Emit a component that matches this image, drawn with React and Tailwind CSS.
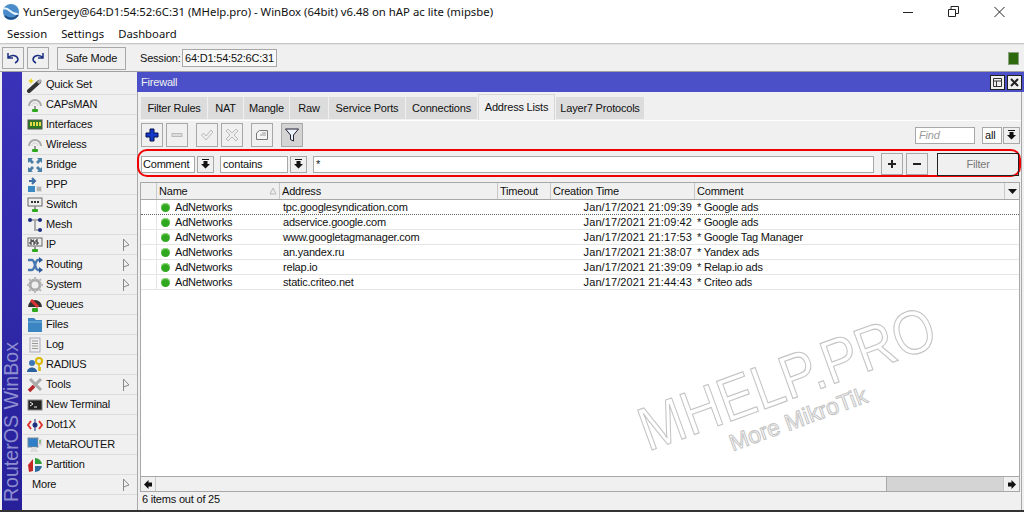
import React from 'react';

const menu = [
  ['Quick Set', 'wand'], ['CAPsMAN', 'antenna'], ['Interfaces', 'iface'], ['Wireless', 'antenna'],
  ['Bridge', 'bridge'], ['PPP', 'ppp'], ['Switch', 'switch'], ['Mesh', 'mesh'],
  ['IP', 'ip', true], ['Routing', 'routing', true], ['System', 'system', true], ['Queues', 'queues'],
  ['Files', 'files'], ['Log', 'log'], ['RADIUS', 'radius'], ['Tools', 'tools', true],
  ['New Terminal', 'terminal'], ['Dot1X', 'dot1x'], ['MetaROUTER', 'meta'], ['Partition', 'partition'],
  ['More', null, true],
];

const tabs = [
  ['Filter Rules', 'w-[66px]'], ['NAT', 'w-[35px]'], ['Mangle', 'w-[45px]'], ['Raw', 'w-[38px]'],
  ['Service Ports', 'w-[76px]'], ['Connections', 'w-[71px]'],
];

const rows = [
  ['tpc.googlesyndication.com', 'Jan/17/2021 21:09:39', '* Google ads'],
  ['adservice.google.com', 'Jan/17/2021 21:09:42', '* Google ads'],
  ['www.googletagmanager.com', 'Jan/17/2021 21:17:53', '* Google Tag Manager'],
  ['an.yandex.ru', 'Jan/17/2021 21:38:07', '* Yandex ads'],
  ['relap.io', 'Jan/17/2021 21:39:09', '* Relap.io ads'],
  ['static.criteo.net', 'Jan/17/2021 21:44:43', '* Criteo ads'],
];

function MenuIcon({ name }) {
  const stem = <><rect x="7" y="9" width="2" height="4" fill="#999" /><rect x="5" y="12" width="6" height="3" rx="1" fill="#2fa81f" /></>;
  switch (name) {
    case 'wand':
      return <svg width="16" height="16" viewBox="0 0 16 16"><path d="M2 14 L12 5" stroke="#333" strokeWidth="4" strokeLinecap="round" /><path d="M11 6 L14 3" stroke="#aaa" strokeWidth="3" /><path d="M4 1l1 2 2 1-2 1-1 2-1-2-2-1 2-1z" fill="#e8d820" /></svg>;
    case 'antenna':
      return <svg width="16" height="16" viewBox="0 0 16 16"><path d="M2 9a6 6 0 0 1 12 0" fill="none" stroke="#aaa" strokeWidth="2" /><path d="M5 9a3 3 0 0 1 6 0" fill="none" stroke="#ddd" strokeWidth="1.5" />{stem}</svg>;
    case 'iface':
      return <svg width="16" height="16" viewBox="0 0 16 16"><rect x="1" y="3" width="14" height="9" fill="#2c7a20" stroke="#555" /><rect x="3" y="5" width="2" height="4" fill="#e3d94a" /><rect x="6" y="5" width="2" height="4" fill="#e3d94a" /><rect x="9" y="5" width="2" height="4" fill="#e3d94a" /><rect x="12" y="5" width="2" height="4" fill="#e3d94a" /></svg>;
    case 'bridge':
      return <svg width="16" height="16" viewBox="0 0 16 16" fill="#4a7fa8"><path d="M1 1h5L4.500 2.500 7 5 5 7 2.500 4.500 1 6z" /><path d="M15 1h-5l1.500 1.500L9 5l2 2 2.500-2.500L15 6z" /><path d="M1 15h5l-1.500-1.500L7 11 5 9l-2.500 2.500L1 10z" /><path d="M15 15h-5l1.500-1.500L9 11l2-2 2.500 2.500L15 10z" /></svg>;
    case 'ppp':
      return <svg width="16" height="16" viewBox="0 0 16 16"><path d="M2 4h5M5 1l3 3-3 3" stroke="#3b6ea5" strokeWidth="2" fill="none" /><rect x="1" y="9" width="7" height="6" fill="#3b8ac4" /><rect x="9" y="9" width="6" height="6" fill="#ddd" /><path d="M10 11h4M10 13h4" stroke="#888" /></svg>;
    case 'switch':
      return <svg width="16" height="16" viewBox="0 0 16 16"><rect x="1" y="1" width="14" height="8" fill="#eee" stroke="#666" /><path d="M4 5h2M7 5h2M10 5h2" stroke="#333" strokeWidth="2" />{stem}</svg>;
    case 'mesh':
      return <svg width="16" height="16" viewBox="0 0 16 16"><path d="M3 3h10M8 3v10h5" stroke="#aaa" strokeWidth="2" fill="none" /><circle cx="3" cy="3" r="2" fill="#1c2f80" /><circle cx="13" cy="3" r="2" fill="#1c2f80" /><circle cx="13" cy="13" r="2" fill="#1c2f80" /></svg>;
    case 'ip':
      return <svg width="16" height="16" viewBox="0 0 16 16"><rect x="1" y="1" width="14" height="8" fill="#eee" stroke="#666" /><path d="M3 3h2v2H3v2h2M7 3H6v2h2v2H6M11 3H9v2h2v2H9" stroke="#222" fill="none" />{stem}</svg>;
    case 'routing':
      return <svg width="16" height="16" viewBox="0 0 16 16"><path d="M1 3h4c3 0 3 10 6 10h2M1 13h4c3 0 3-10 6-10h2" stroke="#4a78b0" strokeWidth="2.500" fill="none" /><path d="M12 0l4 3-4 3zM12 10l4 3-4 3z" fill="#2c5a98" /></svg>;
    case 'system':
      return <svg width="16" height="16" viewBox="0 0 16 16"><circle cx="8" cy="8" r="5" fill="none" stroke="#aaa" strokeWidth="3" /><path d="M8 0v3M8 13v3M0 8h3M13 8h3M2 2l2 2M12 12l2 2M14 2l-2 2M4 12l-2 2" stroke="#bbb" strokeWidth="2" /></svg>;
    case 'queues':
      return <svg width="16" height="16" viewBox="0 0 16 16"><path d="M1 10a7 7 0 0 1 14 0z" fill="#333" /><path d="M4 3l7 7" stroke="#d33" strokeWidth="3" /><rect x="5" y="11" width="6" height="4" rx="1" fill="#2fa81f" /></svg>;
    case 'files':
      return <svg width="16" height="16" viewBox="0 0 16 16"><path d="M1 1h6l2 2h6v12H1z" fill="#3b86c2" /><path d="M1 5h14" stroke="#7db4de" /></svg>;
    case 'log':
      return <svg width="16" height="16" viewBox="0 0 16 16"><rect x="3" y="1" width="10" height="14" fill="#eee" stroke="#aab" /><path d="M5 4h6M5 6.500h6M5 9h6M5 11.500h6" stroke="#999" /></svg>;
    case 'radius':
      return <svg width="16" height="16" viewBox="0 0 16 16"><circle cx="5" cy="6" r="3" fill="#3b78b8" /><path d="M0 15c0-6 10-6 10 0z" fill="#2a62a0" /><circle cx="12" cy="4" r="3" fill="none" stroke="#d8b800" strokeWidth="2" /><path d="M12 7v7M12 11h2M12 13h2" stroke="#d8b800" strokeWidth="1.500" /></svg>;
    case 'tools':
      return <svg width="16" height="16" viewBox="0 0 16 16"><path d="M3 2l11 11" stroke="#aaa" strokeWidth="3" /><path d="M14 2L7 9" stroke="#aaa" strokeWidth="3" /><path d="M7 9l-5 5" stroke="#b5262a" strokeWidth="3.500" /></svg>;
    case 'terminal':
      return <svg width="16" height="16" viewBox="0 0 16 16"><rect x="1" y="3" width="14" height="10" fill="#222" stroke="#888" /><path d="M3 5l3 2-3 2M7 10h3" stroke="#eee" fill="none" /></svg>;
    case 'dot1x':
      return <svg width="16" height="16" viewBox="0 0 16 16"><path d="M4 4L1 8l3 4M12 4l3 4-3 4" stroke="#d33" strokeWidth="2" fill="none" /><circle cx="8" cy="8" r="2.500" fill="#1c2f80" /><path d="M8 2v12" stroke="#1c2f80" /></svg>;
    case 'meta':
      return <svg width="16" height="16" viewBox="0 0 16 16"><rect x="1" y="1" width="10" height="9" fill="#2f7fc8" stroke="#789" /><rect x="11" y="2" width="4" height="7" fill="#ddd" /><path d="M12 4h2" stroke="#2a2" /><path d="M12 6h2" stroke="#888" /><path d="M5 10l-2 5h8l-2-5" fill="#ddd" /></svg>;
    case 'partition':
      return <svg width="16" height="16" viewBox="0 0 16 16"><path d="M6 2L1 8l1 7 4-1z" fill="#c62828" /><path d="M8 1v6h7a7 7 0 0 0-7-6z" fill="#2e9e3a" /><path d="M8 9h7a7 7 0 0 1-7 6z" fill="#2c6aa0" /></svg>;
    default:
      return null;
  }
}

function Arrow() {
  return (
    <svg width="16" height="16" viewBox="0 0 16 16">
      <path d="M2.500 2 v12 M2.500 2 L8 8 L2.500 10" fill="#f0f0f0" stroke="#888" />
    </svg>
  );
}

function DownBtn({ className = '' }) {
  return (
    <div className={`h-[17px] w-[17px] shrink-0 flex items-center justify-center border border-[#a8a8a8] bg-[#f0f0f0] ${className}`}>
      <svg width="11" height="10" viewBox="0 0 11 10"><path d="M2 0h7v1H2z" fill="#111" /><path d="M3.500 2h4v3H10L5.500 9.500 1 5h2.500z" fill="#111" /></svg>
    </div>
  );
}

function ToolBtn({ className = 'bg-[#f0f0f0]', children }) {
  return (
    <div className={`h-[24px] w-[22px] shrink-0 flex items-center justify-center border border-[#a8a8a8] ${className}`}>
      {children}
    </div>
  );
}

function Dot() {
  return <span className="w-[9px] h-[9px] rounded-full bg-[#2fa81f] shadow-[inset_0_1px_1px_#9ee08a] shrink-0" />;
}

export default function App() {
  return (
    <div className="w-[1024px] h-[512px] overflow-hidden bg-[#f0f0f0] text-[11px] tracking-[-0.2px] leading-none text-[#111] flex flex-col font-['Liberation_Sans',sans-serif]">
      {/* window title */}
      <div className="h-[24px] bg-white flex items-center shrink-0 font-['Noto_Sans',sans-serif] tracking-normal">
        <svg width="18" height="18" viewBox="0 0 18 18" className="ml-[2px] mr-[3px]">
          <circle cx="9" cy="9" r="8" fill="#4a8cc9" />
          <path d="M2 6c4-3 7 6 14 5" stroke="#e8f2fb" strokeWidth="2" fill="none" />
          <path d="M3 13c4 4 10 3 13-1" stroke="#1d4f88" strokeWidth="2" fill="none" />
        </svg>
        <span className="text-[11.350px] whitespace-nowrap">YunSergey@64:D1:54:52:6C:31 (MHelp.pro) - WinBox (64bit) v6.48 on hAP ac lite (mipsbe)</span>
        <div className="ml-auto flex items-center">
          <svg width="10" height="12" viewBox="0 0 10 12" className="mr-[35px]"><path d="M0 6.500h10" stroke="#222" /></svg>
          <svg width="11" height="12" viewBox="0 0 11 12" className="mr-[35px]"><path d="M.5 3.500h7v7h-7zM3 3.500V.500h7.500v7H7.500" fill="none" stroke="#222" /></svg>
          <svg width="11" height="12" viewBox="0 0 11 12" className="mr-[19px]"><path d="M.5 1l10 10M10.500 1l-10 10" stroke="#222" /></svg>
        </div>
      </div>
      {/* menu bar */}
      <div className="h-[19px] bg-white flex items-center shrink-0 pl-[7px] gap-[14px] border-b border-[#c8c8c8] box-content font-['Noto_Sans',sans-serif] tracking-normal text-[11.300px]">
        <span>Session</span><span>Settings</span><span>Dashboard</span>
      </div>
      {/* toolbar */}
      <div className="h-[28px] flex items-center shrink-0 pl-[2px] border-t border-[#e4e4e4] border-b-[#a0a0a0] border-b">
        <div className="w-[22px] h-[22px] border border-[#a8a8a8] flex items-center justify-center">
          <svg width="12" height="12" viewBox="0 0 12 12"><path d="M1 1v5h5M1 6c3-4 9-3 10 1 0 2-1 3-3 4" fill="none" stroke="#1c2f80" strokeWidth="1.500" /></svg>
        </div>
        <div className="w-[22px] h-[22px] ml-[3px] border border-[#a8a8a8] flex items-center justify-center">
          <svg width="12" height="12" viewBox="0 0 12 12"><path d="M11 1v5H6M11 6C8 2 2 3 1 7c0 2 1 3 3 4" fill="none" stroke="#1c2f80" strokeWidth="1.500" /></svg>
        </div>
        <div className="w-[69px] h-[23px] ml-[8px] border border-[#a8a8a8] flex items-center justify-center">Safe Mode</div>
        <span className="ml-[14px] w-[42px]">Session:</span>
        <div className="w-[95px] h-[18px] border border-[#a8a8a8] bg-[#f8f8f8] flex items-center pl-[2px] whitespace-nowrap">64:D1:54:52:6C:31</div>
        <div className="ml-auto mr-[5px] w-[11px] h-[13px] bg-[#2d6a0e] border border-[#8aa37e]" />
      </div>

      <div className="flex-1 flex min-h-0">
        {/* RouterOS stripe */}
        <div className="w-[20px] ml-[2px] shrink-0 bg-gradient-to-b from-[#3a32b8] to-[#27209a] flex items-end justify-center">
          <span className="[writing-mode:vertical-rl] rotate-180 text-[#8f8fd0] text-[19.600px] tracking-normal whitespace-nowrap mb-[8px]">RouterOS WinBox</span>
        </div>
        {/* side menu */}
        <div className="w-[114px] shrink-0 ml-px pt-[3px]">
          {menu.map(([label, icon, arrow]) => (
            <div key={label} className="h-[20px] flex items-center border-b border-[#dcdcdc] pl-[4px]">
              {icon && <div className="w-[16px] h-[16px] shrink-0 mr-[3px]"><MenuIcon name={icon} /></div>}
              <span className={icon ? '' : 'pl-[5px]'}>{label}</span>
              {arrow && <div className="ml-auto"><Arrow /></div>}
            </div>
          ))}
        </div>

        {/* firewall window */}
        <div className="flex-1 min-w-0 flex flex-col border-r-[2px] border-[#f0f0f0]">
          <div className="h-[20px] bg-[#4b50c8] text-[#f0f0f0] flex items-center pl-[4px] shrink-0 -mr-[2px]">
            <span>Firewall</span>
            <div className="ml-auto flex gap-[2px] pr-[2px]">
              <div className="w-[15px] h-[15px] bg-[#f0f0f0] border border-[#222] flex items-center justify-center">
                <svg width="11" height="11" viewBox="0 0 11 11"><path d="M1.500 1.500h8v8h-8zM1.500 4h8M4.500 4v5.500" fill="none" stroke="#333" /></svg>
              </div>
              <div className="w-[15px] h-[15px] bg-[#f0f0f0] border border-[#222] flex items-center justify-center">
                <svg width="9" height="9" viewBox="0 0 9 9"><path d="M1 1l7 7M8 1L1 8" stroke="#222" strokeWidth="2" /></svg>
              </div>
            </div>
          </div>

          <div className="flex-1 min-h-0 flex flex-col border-x border-[#a8a8a8] pl-[2px]">
            {/* tabs */}
            <div className="h-[28px] pt-[5px] pl-px flex gap-[1px] shrink-0">
              {tabs.map(([t, w]) => (
                <div key={t} className={`${w} h-[22px] bg-[#dcdcdc] flex items-center justify-center whitespace-nowrap`}>{t}</div>
              ))}
              <div className="w-[77px] h-[26px] -mt-[3px] pb-px bg-[#f0f0f0] border-x border-t border-[#d8d8d8] flex items-center justify-center whitespace-nowrap">Address Lists</div>
              <div className="w-[88px] h-[22px] bg-[#dcdcdc] flex items-center justify-center whitespace-nowrap">Layer7 Protocols</div>
            </div>
            <div className="h-[29px] pl-px flex items-center border-t border-white shrink-0">
              <ToolBtn>
                <svg width="14" height="14" viewBox="0 0 14 14"><path d="M5 1h4v4h4v4H9v4H5V9H1V5h4z" fill="#1638c8" stroke="#06124e" /></svg>
              </ToolBtn>
              <ToolBtn className="ml-[3px]">
                <svg width="14" height="14" viewBox="0 0 14 14"><rect x="2" y="5.500" width="10" height="3" fill="#ddd" stroke="#bbb" /></svg>
              </ToolBtn>
              <ToolBtn className="ml-[8px]">
                <svg width="14" height="14" viewBox="0 0 14 14"><path d="M1.500 7l2-2 2.500 3 5-6 2 2-7 8z" fill="#eee" stroke="#bbb" /></svg>
              </ToolBtn>
              <ToolBtn className="ml-[3px]">
                <svg width="14" height="14" viewBox="0 0 14 14"><path d="M1 3l2-2 4 4 4-4 2 2-4 4 4 4-2 2-4-4-4 4-2-2 4-4z" fill="#eee" stroke="#bbb" /></svg>
              </ToolBtn>
              <ToolBtn className="ml-[8px]">
                <svg width="14" height="14" viewBox="0 0 14 14"><path d="M1.500 5l3-2.500h8v9h-11z" fill="#f4f4f4" stroke="#777" /><path d="M7 5h4M5 7h6" stroke="#999" /></svg>
              </ToolBtn>
              <ToolBtn className="ml-[8px] bg-[#d4d4d4]">
                <svg width="16" height="16" viewBox="0 0 16 16"><path d="M1.500 2h13L9.500 8v6l-3-1.500V8z" fill="#eaf1f8" stroke="#223" /></svg>
              </ToolBtn>
              <div className="ml-auto w-[60px] h-[17px] bg-white border border-[#a8a8a8] italic text-[#9a9a9a] pl-[3px] flex items-center">Find</div>
              <div className="ml-[7px] w-[20px] h-[17px] bg-white border border-[#a8a8a8] pl-[2px] flex items-center">all</div>
              <DownBtn className="ml-px mr-px" />
            </div>

            {/* filter row */}
            <div className="h-[28px] -ml-[3px] flex items-center border-2 border-[#f00000] rounded-[10px] shrink-0 pl-[2px] pt-[2px]">
              <div className="w-[54px] h-[17px] bg-white border border-[#a8a8a8] pl-[1px] flex items-center shrink-0">Comment</div>
              <DownBtn className="ml-[2px]" />
              <div className="ml-[6px] w-[68px] h-[17px] bg-white border border-[#a8a8a8] pl-[2px] flex items-center shrink-0">contains</div>
              <DownBtn className="ml-[2px]" />
              <div className="ml-[6px] flex-1 h-[17px] bg-white border border-[#a8a8a8] pl-[2px] flex items-center">*</div>
              <div className="ml-[7px] w-[22px] h-[22px] border border-[#a8a8a8] flex items-center justify-center shrink-0">
                <svg width="10" height="10" viewBox="0 0 10 10"><path d="M5 1v8M1 5h8" stroke="#222" strokeWidth="2" /></svg>
              </div>
              <div className="ml-[3px] w-[22px] h-[22px] border border-[#a8a8a8] flex items-center justify-center shrink-0">
                <svg width="10" height="10" viewBox="0 0 10 10"><path d="M1 5h8" stroke="#222" strokeWidth="2" /></svg>
              </div>
              <div className="ml-[9px] w-[82px] h-[23px] border border-[#222] text-[#777] flex items-center justify-center shrink-0">Filter</div>
            </div>

            {/* table */}
            <div className="relative flex-1 min-h-0 mt-[5px] mr-px border-x border-t border-[#a8a8a8] bg-white flex flex-col">
              <div className="h-[17px] bg-[#f0f0f0] border-b border-[#a8a8a8] flex shrink-0">
                <div className="w-[16px] border-r border-[#c8c8c8]" />
                <div className="w-[123px] border-r border-[#c8c8c8] pl-[2px] flex items-center">Name
                  <svg width="8" height="8" viewBox="0 0 8 8" className="ml-auto mr-[2px]"><path d="M4 1L1 7h6z" fill="#eee" stroke="#bbb" /></svg>
                </div>
                <div className="w-[218px] border-r border-[#c8c8c8] pl-[2px] flex items-center">Address</div>
                <div className="w-[53px] border-r border-[#c8c8c8] pl-[2px] flex items-center">Timeout</div>
                <div className="w-[144px] border-r border-[#c8c8c8] pl-[2px] flex items-center">Creation Time</div>
                <div className="flex-1 pl-[2px] flex items-center">Comment</div>
                <div className="w-[15px] border-l border-[#c8c8c8] flex items-center justify-center">
                  <svg width="9" height="5" viewBox="0 0 9 5"><path d="M0 0h9L4.500 5z" fill="#111" /></svg>
                </div>
              </div>
              {rows.map(([addr, time, comment], i) => (
                <div key={addr} className={`h-[15px] flex shrink-0 border-b ${i === 0 ? 'border-dotted border-[#666]' : 'border-[#e6e6e6]'}`}>
                  <div className="w-[16px] border-r border-[#e6e6e6]" />
                  <div className="w-[123px] flex items-center pl-[4px] gap-[5px]"><Dot /><span>AdNetworks</span></div>
                  <div className="w-[218px] pl-[3px] flex items-center">{addr}</div>
                  <div className="w-[53px]" />
                  <div className="w-[144px] pr-[3px] flex items-center justify-end tracking-[0.1px]">{time}</div>
                  <div className="flex-1 pl-[2px] flex items-center">{comment}</div>
                </div>
              ))}
              <div className="flex-1" />

              {/* watermark */}
              <div className="absolute left-[510px] top-[223px] -rotate-[20deg] scale-y-[1.14] origin-bottom-left text-transparent whitespace-nowrap tracking-normal [-webkit-text-stroke:1px_#c4c4c4] text-[54px] leading-none pointer-events-none">MHELP.PRO</div>
              <div className="absolute left-[593px] top-[249px] -rotate-[20deg] origin-bottom-left text-transparent whitespace-nowrap tracking-normal [-webkit-text-stroke:1px_#c4c4c4] text-[23px] leading-none pointer-events-none">More MikroTik</div>

              {/* horizontal scrollbar */}
              <div className="h-[16px] border-y border-[#a8a8a8] bg-[#f0f0f0] flex shrink-0">
                <div className="w-[15px] border-r border-[#c8c8c8] flex items-center justify-center">
                  <svg width="8" height="9" viewBox="0 0 8 9"><path d="M0 4.500L4.500 0v2.500H8v4H4.500V9z" fill="#111" /></svg>
                </div>
                <div className="flex-1 border-r border-[#a8a8a8]" />
                <div className="w-[117px] bg-[#d4d4d4] border-r border-[#c8c8c8]" />
                <div className="w-[15px] flex items-center justify-center">
                  <svg width="8" height="9" viewBox="0 0 8 9"><path d="M8 4.500L3.500 0v2.500H0v4h3.500V9z" fill="#111" /></svg>
                </div>
              </div>
            </div>
            <div className="h-[18px] mr-px flex items-center pl-[2px] pb-[3px] shrink-0">6 items out of 25</div>
          </div>
        </div>
      </div>
      <div className="h-[2px] bg-[#333] shrink-0" />
    </div>
  );
}
